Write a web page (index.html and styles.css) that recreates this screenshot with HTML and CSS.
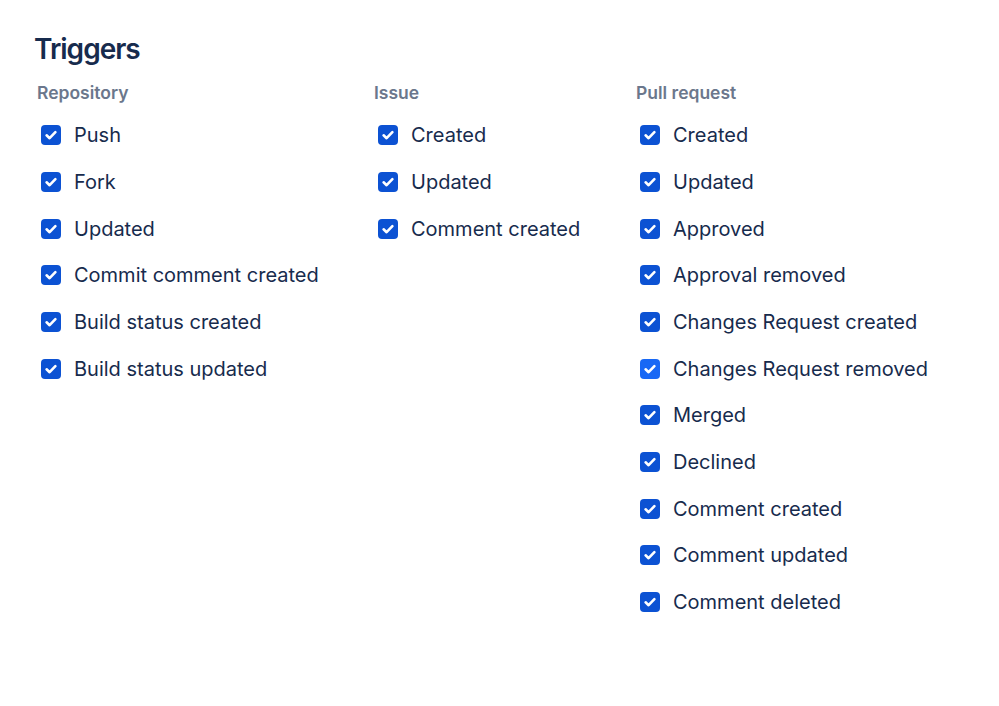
FILE: index.html
```html
<!DOCTYPE html>
<html>
<head>
<meta charset="utf-8">
<link rel="stylesheet" href="styles.css">
</head>
<body>
<main class="page">
  <h1 class="title">Triggers</h1>
  <div class="columns">
    <section class="group g-repo">
      <h2 class="group-title">Repository</h2>
      <ul class="list">
        <li class="item"><span class="box"><svg viewBox="0 0 20 20"><path d="M5.6 10.3l3 2.9 5.8-6.1" /></svg></span>Push</li>
        <li class="item"><span class="box"><svg viewBox="0 0 20 20"><path d="M5.6 10.3l3 2.9 5.8-6.1" /></svg></span>Fork</li>
        <li class="item"><span class="box"><svg viewBox="0 0 20 20"><path d="M5.6 10.3l3 2.9 5.8-6.1" /></svg></span>Updated</li>
        <li class="item"><span class="box"><svg viewBox="0 0 20 20"><path d="M5.6 10.3l3 2.9 5.8-6.1" /></svg></span>Commit comment created</li>
        <li class="item"><span class="box"><svg viewBox="0 0 20 20"><path d="M5.6 10.3l3 2.9 5.8-6.1" /></svg></span>Build status created</li>
        <li class="item"><span class="box"><svg viewBox="0 0 20 20"><path d="M5.6 10.3l3 2.9 5.8-6.1" /></svg></span>Build status updated</li>
      </ul>
    </section>
    <section class="group g-issue">
      <h2 class="group-title">Issue</h2>
      <ul class="list">
        <li class="item"><span class="box"><svg viewBox="0 0 20 20"><path d="M5.6 10.3l3 2.9 5.8-6.1" /></svg></span>Created</li>
        <li class="item"><span class="box"><svg viewBox="0 0 20 20"><path d="M5.6 10.3l3 2.9 5.8-6.1" /></svg></span>Updated</li>
        <li class="item"><span class="box"><svg viewBox="0 0 20 20"><path d="M5.6 10.3l3 2.9 5.8-6.1" /></svg></span>Comment created</li>
      </ul>
    </section>
    <section class="group g-pr">
      <h2 class="group-title">Pull request</h2>
      <ul class="list">
        <li class="item"><span class="box"><svg viewBox="0 0 20 20"><path d="M5.6 10.3l3 2.9 5.8-6.1" /></svg></span>Created</li>
        <li class="item"><span class="box"><svg viewBox="0 0 20 20"><path d="M5.6 10.3l3 2.9 5.8-6.1" /></svg></span>Updated</li>
        <li class="item"><span class="box"><svg viewBox="0 0 20 20"><path d="M5.6 10.3l3 2.9 5.8-6.1" /></svg></span>Approved</li>
        <li class="item"><span class="box"><svg viewBox="0 0 20 20"><path d="M5.6 10.3l3 2.9 5.8-6.1" /></svg></span>Approval removed</li>
        <li class="item"><span class="box"><svg viewBox="0 0 20 20"><path d="M5.6 10.3l3 2.9 5.8-6.1" /></svg></span>Changes Request created</li>
        <li class="item"><span class="box box-hover"><svg viewBox="0 0 20 20"><path d="M5.6 10.3l3 2.9 5.8-6.1" /></svg></span>Changes Request removed</li>
        <li class="item"><span class="box"><svg viewBox="0 0 20 20"><path d="M5.6 10.3l3 2.9 5.8-6.1" /></svg></span>Merged</li>
        <li class="item"><span class="box"><svg viewBox="0 0 20 20"><path d="M5.6 10.3l3 2.9 5.8-6.1" /></svg></span>Declined</li>
        <li class="item"><span class="box"><svg viewBox="0 0 20 20"><path d="M5.6 10.3l3 2.9 5.8-6.1" /></svg></span>Comment created</li>
        <li class="item"><span class="box"><svg viewBox="0 0 20 20"><path d="M5.6 10.3l3 2.9 5.8-6.1" /></svg></span>Comment updated</li>
        <li class="item"><span class="box"><svg viewBox="0 0 20 20"><path d="M5.6 10.3l3 2.9 5.8-6.1" /></svg></span>Comment deleted</li>
      </ul>
    </section>
  </div>
</main>
</body>
</html>
```
FILE: styles.css
```css
html, body {
  margin: 0;
  padding: 0;
  background: #ffffff;
}
body {
  font-family: Inter, "Noto Sans", "Liberation Sans", sans-serif;
  color: #172B4D;
}
.page {
  padding: 31px 0 0 34px;
}
.title {
  margin: 0;
  font-size: 28px;
  line-height: 36px;
  font-weight: 600;
  letter-spacing: -1px;
  color: #172B4D;
}
.columns {
  display: grid;
  grid-template-columns: 337px 262px auto;
  margin-top: 15px;
  padding-left: 3px;
}
.group-title {
  margin: 0 0 8px 0;
  font-size: 17.5px;
  line-height: 22px;
  font-weight: 600;
  color: #6B778C;
}
.list {
  list-style: none;
  margin: 0;
  padding: 0;
}
.item {
  display: flex;
  align-items: center;
  height: 46.67px;
  font-size: 20px;
  color: #172B4D;
}
.box {
  width: 20px;
  height: 20px;
  margin-left: 4px;
  margin-right: 13px;
  border-radius: 4px;
  background: #0C52D3;
  display: flex;
  flex: none;
}
.box-hover {
  background: #1868F5;
}
.box svg {
  width: 20px;
  height: 20px;
  fill: none;
  stroke: #ffffff;
  stroke-width: 2.6;
  stroke-linecap: round;
  stroke-linejoin: round;
}
```
